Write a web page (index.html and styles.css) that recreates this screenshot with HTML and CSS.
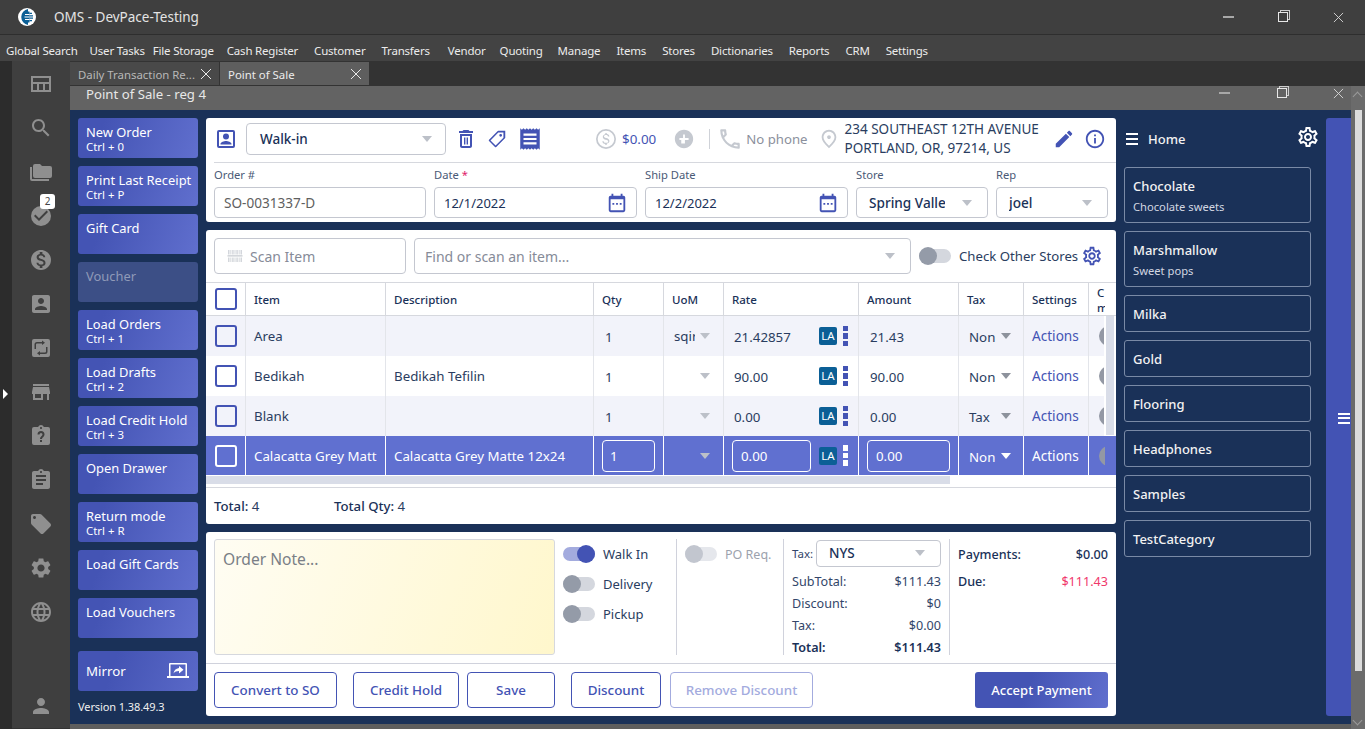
FILE: index.html
```html
<!DOCTYPE html>
<html lang="en">
<head>
<meta charset="utf-8">
<title>OMS - DevPace-Testing</title>
<link rel="stylesheet" href="styles.css">
</head>
<body>
<svg class="defs" width="0" height="0" aria-hidden="true">
  <symbol id="i-search" viewBox="0 0 24 24"><path d="M15.5 14h-.79l-.28-.27C15.41 12.59 16 11.11 16 9.5 16 5.91 13.09 3 9.5 3S3 5.91 3 9.5 5.91 16 9.5 16c1.61 0 3.09-.59 4.23-1.57l.27.28v.79l5 4.99L20.49 19l-4.99-5zm-6 0C7.01 14 5 11.99 5 9.5S7.01 5 9.5 5 14 7.01 14 9.5 11.99 14 9.5 14z"/></symbol>
  <symbol id="i-quilt" viewBox="0 0 24 24"><path d="M2 4h20v16H2V4zm2 2v4h16V6H4zm0 6v6h4v-6H4zm6 0v6h4v-6h-4zm6 0v6h4v-6h-4z"/></symbol>
  <symbol id="i-folders" viewBox="0 0 24 24"><path d="M1 7h2v12h17v2H3a2 2 0 0 1-2-2V7zm5-3h5l2 2h8a2 2 0 0 1 2 2v8a2 2 0 0 1-2 2H6a2 2 0 0 1-2-2V6a2 2 0 0 1 2-2z"/></symbol>
  <symbol id="i-check" viewBox="0 0 24 24"><path d="M12 2a10 10 0 1 0 0 20 10 10 0 0 0 0-20zm-2 15-5-5 1.41-1.41L10 14.17l7.59-7.59L19 8l-9 9z"/></symbol>
  <symbol id="i-money" viewBox="0 0 24 24"><path d="M12 2C6.48 2 2 6.48 2 12s4.48 10 10 10 10-4.48 10-10S17.52 2 12 2zm1.41 16.09V20h-2.67v-1.93c-1.71-.36-3.16-1.46-3.27-3.4h1.96c.1 1.05.82 1.87 2.65 1.87 1.96 0 2.4-.98 2.4-1.59 0-.83-.44-1.61-2.67-2.14-2.48-.6-4.18-1.62-4.18-3.67 0-1.72 1.39-2.84 3.11-3.21V4h2.67v1.95c1.86.45 2.79 1.86 2.85 3.39H14.3c-.05-1.11-.64-1.87-2.22-1.87-1.5 0-2.4.68-2.4 1.64 0 .84.65 1.39 2.67 1.91s4.18 1.39 4.18 3.91c-.01 1.83-1.38 2.83-3.12 3.16z"/></symbol>
  <symbol id="i-account" viewBox="0 0 24 24"><path d="M3 5v14c0 1.1.89 2 2 2h14c1.1 0 2-.9 2-2V5c0-1.1-.9-2-2-2H5c-1.11 0-2 .9-2 2zm12 4c0 1.66-1.34 3-3 3s-3-1.34-3-3 1.34-3 3-3 3 1.34 3 3zm-9 8c0-2 4-3.1 6-3.1s6 1.1 6 3.1v1H6v-1z"/></symbol>
  <symbol id="i-account-o" viewBox="0 0 24 24"><path d="M5 3h14a2 2 0 0 1 2 2v14a2 2 0 0 1-2 2H5a2 2 0 0 1-2-2V5a2 2 0 0 1 2-2zm0 2v14h14V5H5zm7 1.5a3 3 0 1 1 0 6 3 3 0 0 1 0-6zM6.5 17c0-1.9 3.7-3 5.5-3s5.500 1.100 5.500 3v.5h-11V17z"/></symbol>
  <symbol id="i-transfer" viewBox="0 0 24 24"><path d="M5 3h14a2 2 0 0 1 2 2v14a2 2 0 0 1-2 2H5a2 2 0 0 1-2-2V5a2 2 0 0 1 2-2zm8 1.500V6H8a2.500 2.500 0 0 0-2.500 2.500V13H7V8.500A1 1 0 0 1 8 7.500h5V9l3-2.250L13 4.500zM17 11v4.500a1 1 0 0 1-1 1h-5V15l-3 2.250 3 2.250V18h5a2.500 2.500 0 0 0 2.500-2.500V11H17z" fill-rule="evenodd"/></symbol>
  <symbol id="i-store" viewBox="0 0 24 24"><path d="M20 4H4v2h16V4zm1 10v-2l-1-5H4l-1 5v2h1v6h10v-6h4v6h2v-6h1zm-9 4H6v-4h6v4z"/></symbol>
  <symbol id="i-help" viewBox="0 0 24 24"><path d="M19 3h-4.180C14.400 1.840 13.300 1 12 1s-2.400.84-2.820 2H5a2 2 0 0 0-2 2v14a2 2 0 0 0 2 2h14a2 2 0 0 0 2-2V5a2 2 0 0 0-2-2zm-8 15v-2h2v2h-2zm3.300-5.100c-.6.6-1.300 1-1.300 2.100h-2c0-1.700.9-2.400 1.600-3.100.5-.5.900-.8.900-1.400a1.500 1.500 0 0 0-3 0H8.500a3.500 3.500 0 0 1 7 0c0 1-.6 1.800-1.200 2.400zM12 3c.55 0 1 .45 1 1s-.45 1-1 1-1-.45-1-1 .45-1 1-1z"/></symbol>
  <symbol id="i-assign" viewBox="0 0 24 24"><path d="M19 3h-4.180C14.400 1.840 13.300 1 12 1c-1.300 0-2.400.84-2.820 2H5c-1.100 0-2 .9-2 2v14c0 1.100.9 2 2 2h14c1.100 0 2-.9 2-2V5c0-1.100-.9-2-2-2zm-7 0c.55 0 1 .45 1 1s-.45 1-1 1-1-.45-1-1 .45-1 1-1zm2 14H7v-2h7v2zm3-4H7v-2h10v2zm0-4H7V7h10v2z"/></symbol>
  <symbol id="i-tag" viewBox="0 0 24 24"><path d="M21.410 11.580l-9-9C12.050 2.220 11.550 2 11 2H4c-1.100 0-2 .9-2 2v7c0 .55.22 1.050.59 1.420l9 9c.36.36.86.58 1.410.58.55 0 1.050-.22 1.410-.59l7-7c.37-.36.59-.86.59-1.410 0-.55-.23-1.060-.59-1.420zM5.500 7C4.670 7 4 6.330 4 5.500S4.670 4 5.500 4 7 4.670 7 5.500 6.330 7 5.500 7z"/></symbol>
  <symbol id="i-tag-o" viewBox="0 0 24 24"><path d="M21 3v7.500a1 1 0 0 1-.3.7l-9.500 9.500a1 1 0 0 1-1.400 0l-6.500-6.500a1 1 0 0 1 0-1.400l9.500-9.500a1 1 0 0 1 .7-.3H21a.5.5 0 0 1 0 0zm-2 2h-5.600l-8.500 8.500 5.600 5.600L19 10.600V5zm-3 1.500a1.500 1.500 0 1 1 0 3 1.500 1.500 0 0 1 0-3z"/></symbol>
  <symbol id="i-gear" viewBox="0 0 24 24"><path d="M19.140 12.940c.04-.3.06-.61.06-.94 0-.32-.02-.64-.07-.94l2.030-1.580c.18-.14.23-.41.12-.61l-1.920-3.320c-.12-.22-.37-.29-.59-.22l-2.390.96c-.5-.38-1.030-.7-1.620-.94l-.36-2.540c-.04-.24-.24-.41-.48-.41h-3.840c-.24 0-.43.17-.47.41l-.36 2.540c-.59.24-1.130.57-1.620.94l-2.390-.96c-.22-.08-.47 0-.59.22L2.740 8.870c-.12.21-.08.47.12.61l2.030 1.580c-.05.3-.09.63-.09.94s.02.64.07.94l-2.030 1.580c-.18.14-.23.41-.12.61l1.920 3.320c.12.22.37.29.59.22l2.390-.96c.5.38 1.030.7 1.620.94l.36 2.540c.05.24.24.41.48.41h3.840c.24 0 .44-.17.47-.41l.36-2.540c.59-.24 1.130-.56 1.620-.94l2.390.96c.22.08.47 0 .59-.22l1.920-3.320c.12-.22.07-.47-.12-.61l-2.010-1.580zM12 15.600c-1.980 0-3.600-1.620-3.600-3.600s1.620-3.600 3.600-3.600 3.600 1.620 3.600 3.600-1.620 3.600-3.600 3.600z"/></symbol>
  <symbol id="i-gear-o" viewBox="0 0 24 24"><path d="M19.430 12.980c.04-.32.07-.64.07-.98 0-.34-.03-.66-.07-.98l2.110-1.650c.19-.15.24-.42.12-.64l-2-3.460c-.09-.16-.26-.25-.44-.25-.06 0-.12.01-.17.03l-2.490 1c-.52-.4-1.080-.73-1.690-.98l-.38-2.650C14.460 2.180 14.250 2 14 2h-4c-.25 0-.46.18-.49.42l-.38 2.650c-.61.25-1.170.59-1.690.98l-2.490-1c-.06-.02-.12-.03-.18-.03-.17 0-.34.09-.43.25l-2 3.460c-.13.22-.07.49.12.64l2.110 1.650c-.04.32-.07.65-.07.98 0 .33.03.66.07.98l-2.110 1.650c-.19.15-.24.42-.12.64l2 3.460c.09.16.26.25.44.25.06 0 .12-.01.17-.03l2.490-1c.52.4 1.080.73 1.690.98l.38 2.650c.03.24.24.42.49.42h4c.25 0 .46-.18.49-.42l.38-2.650c.61-.25 1.170-.59 1.690-.98l2.490 1c.06.02.12.03.18.03.17 0 .34-.09.43-.25l2-3.460c.12-.22.07-.49-.12-.64l-2.110-1.650zm-1.980-1.710c.04.31.05.52.05.73 0 .21-.02.43-.05.73l-.14 1.130.89.7 1.080.84-.7 1.210-1.270-.51-1.040-.42-.9.68c-.43.32-.84.56-1.250.73l-1.060.43-.16 1.130-.2 1.350h-1.400l-.19-1.350-.16-1.130-1.060-.43c-.43-.18-.83-.41-1.230-.71l-.91-.7-1.060.43-1.270.51-.7-1.210 1.080-.84.89-.7-.14-1.130c-.03-.31-.05-.54-.05-.74s.02-.43.05-.73l.14-1.130-.89-.7-1.080-.84.7-1.210 1.270.51 1.040.42.9-.68c.43-.32.84-.56 1.250-.73l1.060-.43.16-1.130.2-1.350h1.390l.19 1.350.16 1.130 1.060.43c.43.18.83.41 1.230.71l.91.7 1.060-.43 1.270-.51.7 1.210-1.070.85-.89.7.14 1.130zM12 8c-2.210 0-4 1.790-4 4s1.790 4 4 4 4-1.790 4-4-1.790-4-4-4zm0 6c-1.100 0-2-.9-2-2s.9-2 2-2 2 .9 2 2-.9 2-2 2z"/></symbol>
  <symbol id="i-globe" viewBox="0 0 24 24"><path d="M11.990 2C6.470 2 2 6.480 2 12s4.470 10 9.990 10C17.520 22 22 17.520 22 12S17.520 2 11.990 2zm6.930 6h-2.950c-.32-1.250-.78-2.450-1.380-3.560 1.840.63 3.370 1.910 4.330 3.560zM12 4.040c.83 1.200 1.480 2.530 1.910 3.960h-3.820c.43-1.430 1.080-2.760 1.910-3.960zM4.260 14C4.100 13.360 4 12.690 4 12s.1-1.360.26-2h3.380c-.08.66-.14 1.320-.14 2 0 .68.06 1.340.14 2H4.260zm.82 2h2.950c.32 1.250.78 2.450 1.380 3.560-1.840-.63-3.370-1.900-4.330-3.560zm2.950-8H5.080c.96-1.660 2.490-2.930 4.330-3.560C8.810 5.550 8.350 6.750 8.030 8zM12 19.960c-.83-1.200-1.480-2.530-1.910-3.960h3.820c-.43 1.430-1.080 2.760-1.910 3.960zM14.340 14H9.660c-.09-.66-.16-1.320-.16-2 0-.68.07-1.350.16-2h4.680c.09.65.16 1.320.16 2 0 .68-.07 1.340-.16 2zm.25 5.560c.6-1.110 1.060-2.310 1.380-3.560h2.950c-.96 1.650-2.490 2.930-4.330 3.560zM16.360 14c.08-.66.14-1.320.14-2 0-.68-.06-1.340-.14-2h3.380c.16.64.26 1.310.26 2s-.1 1.360-.26 2h-3.380z"/></symbol>
  <symbol id="i-person" viewBox="0 0 24 24"><path d="M12 12c2.210 0 4-1.790 4-4s-1.790-4-4-4-4 1.790-4 4 1.790 4 4 4zm0 2c-2.670 0-8 1.340-8 4v2h16v-2c0-2.660-5.330-4-8-4z"/></symbol>
  <symbol id="i-trash" viewBox="0 0 24 24"><path d="M6 19c0 1.100.9 2 2 2h8c1.100 0 2-.9 2-2V7H6v12zM8 9h8v10H8V9zm2 1.500h1.400v7H10zm2.600 0H14v7h-1.400zM15.500 4l-1-1h-5l-1 1H5v2h14V4z"/></symbol>
  <symbol id="i-receipt" viewBox="0 0 24 24"><path d="M18 17H6v-2h12v2zm0-4H6v-2h12v2zm0-4H6V7h12v2zM3 22l1.500-1.500L6 22l1.500-1.500L9 22l1.500-1.500L12 22l1.500-1.500L15 22l1.500-1.500L18 22l1.500-1.500L21 22V2l-1.500 1.500L18 2l-1.500 1.500L15 2l-1.500 1.500L12 2l-1.500 1.500L9 2 7.500 3.500 6 2 4.500 3.500 3 2v20z"/></symbol>
  <symbol id="i-add" viewBox="0 0 24 24"><path d="M12 2C6.480 2 2 6.480 2 12s4.480 10 10 10 10-4.480 10-10S17.520 2 12 2zm5 11h-4v4h-4v-4H7v-2h4V7h2v4h4v2z"/></symbol>
  <symbol id="i-phone" viewBox="0 0 24 24"><path d="M6.540 5c.06.89.21 1.760.45 2.590l-1.200 1.200c-.41-1.200-.67-2.470-.76-3.790h1.510m9.860 12.020c.85.24 1.720.39 2.600.45v1.490c-1.320-.09-2.590-.35-3.800-.75l1.200-1.190M7.500 3H4c-.55 0-1 .45-1 1 0 9.390 7.610 17 17 17 .55 0 1-.45 1-1v-3.490c0-.55-.45-1-1-1-1.240 0-2.450-.2-3.570-.57-.1-.04-.21-.05-.31-.05-.26 0-.51.1-.71.29l-2.200 2.200c-2.830-1.450-5.150-3.760-6.590-6.590l2.200-2.200c.28-.28.36-.67.25-1.020C8.700 6.450 8.500 5.250 8.500 4c0-.55-.45-1-1-1z"/></symbol>
  <symbol id="i-place" viewBox="0 0 24 24"><path d="M12 12c-1.100 0-2-.9-2-2s.9-2 2-2 2 .9 2 2-.9 2-2 2zm6-1.800C18 6.570 15.350 4 12 4s-6 2.570-6 6.200c0 2.340 1.950 5.440 6 9.140 4.050-3.700 6-6.800 6-9.140zM12 2c4.200 0 8 3.220 8 8.200 0 3.320-2.670 7.250-8 11.800-5.330-4.550-8-8.480-8-11.800C4 5.220 7.800 2 12 2z"/></symbol>
  <symbol id="i-edit" viewBox="0 0 24 24"><path d="M3 17.250V21h3.750L17.810 9.940l-3.750-3.750L3 17.250zM20.710 7.040c.39-.39.39-1.020 0-1.410l-2.340-2.340c-.39-.39-1.020-.39-1.410 0l-1.830 1.830 3.750 3.750 1.830-1.830z"/></symbol>
  <symbol id="i-info" viewBox="0 0 24 24"><path d="M11 7h2v2h-2zm0 4h2v6h-2zm1-9C6.480 2 2 6.480 2 12s4.480 10 10 10 10-4.480 10-10S17.520 2 12 2zm0 18c-4.410 0-8-3.590-8-8s3.590-8 8-8 8 3.590 8 8-3.590 8-8 8z"/></symbol>
  <symbol id="i-cal" viewBox="0 0 24 24"><path d="M19 4h-1V2h-2v2H8V2H6v2H5a2 2 0 0 0-2 2v14a2 2 0 0 0 2 2h14a2 2 0 0 0 2-2V6a2 2 0 0 0-2-2zm0 16H5V8h14v12zM7 12h2v2H7zm4 0h2v2h-2zm4 0h2v2h-2z"/></symbol>
  <symbol id="i-dollar" viewBox="0 0 24 24"><path d="M12 2a10 10 0 1 0 0 20 10 10 0 0 0 0-20zm0 1.700a8.300 8.300 0 1 1 0 16.600 8.300 8.300 0 0 1 0-16.600zM11.300 6v1.300c-1.500.3-2.500 1.300-2.500 2.600 0 1.600 1.300 2.300 3.200 2.800 1.700.4 2.200 1 2.200 1.700 0 .6-.5 1.400-2.200 1.400-1.500 0-2.200-.7-2.300-1.600H8.300c.1 1.600 1.300 2.600 3 2.900V18h1.400v-1.300c1.600-.3 2.700-1.200 2.700-2.700 0-2-1.700-2.700-3.300-3.100-1.700-.4-2.100-.9-2.100-1.500 0-.7.700-1.300 2-1.300s1.900.6 2 1.500h1.400c-.1-1.400-1-2.400-2.700-2.800V6h-1.400z"/></symbol>
  <symbol id="i-barcode" viewBox="0 0 24 24"><path d="M3 4h1.500v6H3zm3 0h1v6H6zm2.500 0H10v6H8.500zm3 0h1v6h-1zm2.500 0h1.500v6H14zm3 0h1v6h-1zm2.500 0H21v6h-1.500zM2 11h20v1.500H2zM3 14h1.500v6H3zm3 0h1v6H6zm2.500 0H10v6H8.500zm3 0h1v6h-1zm2.500 0h1.500v6H14zm3 0h1v6h-1zm2.500 0H21v6h-1.500z"/></symbol>
  <symbol id="i-mirror" viewBox="0 0 24 24"><path d="M4 4h16a1 1 0 0 1 1 1v12h2v2H1v-2h2V5a1 1 0 0 1 1-1zm.500 1.500V17h15V5.500h-15zM13 7l4.500 3.700L13 14.400v-2.300c-2.500 0-4.200.8-5.500 2.400.5-2.800 2.200-5.100 5.500-5.500V7z"/></symbol>
</svg>

<div class="app">
  <header class="titlebar">
    <svg class="logo" viewBox="0 0 18 18"><circle cx="9" cy="9" r="9" fill="#fff"/><path d="M10 1.100a8 8 0 0 0 0 15.800z" fill="#0b5f96"/><path d="M10 3.500h1.500v11H10z" fill="#0b5f96"/><path d="M7 6.500h4.500M6.500 9h5M7 11.500h4.500" stroke="#fff" stroke-width="1.200"/><path d="M11.500 5.400h2.500M11.500 7.800h3.500M11.500 10.200h3.500M11.500 12.600h2.500" stroke="#0b5f96" stroke-width="1.200"/></svg>
    <span class="app-title">OMS - DevPace-Testing</span>
    <div class="win-controls">
      <span class="win-btn win-min"></span>
      <span class="win-btn win-max"></span>
      <svg class="win-close" viewBox="0 0 12 12"><path d="M1 1l10 10M11 1L1 11" stroke="#d8d8d8" stroke-width="1" fill="none"/></svg>
    </div>
  </header>
  <nav class="menubar">
    <span>Global Search</span><span>User Tasks</span><span>File Storage</span><span>Cash Register</span><span>Customer</span><span>Transfers</span><span>Vendor</span><span>Quoting</span><span>Manage</span><span>Items</span><span>Stores</span><span>Dictionaries</span><span>Reports</span><span>CRM</span><span>Settings</span>
  </nav>
  <div class="workspace">
    <div class="edge"><span class="edge-arrow"></span></div>
    <aside class="rail">
      <svg class="rail-i"><use href="#i-quilt"/></svg>
      <svg class="rail-i"><use href="#i-search"/></svg>
      <svg class="rail-i"><use href="#i-folders"/></svg>
      <div class="rail-badged"><svg class="rail-i"><use href="#i-check"/></svg><span class="badge">2</span></div>
      <svg class="rail-i"><use href="#i-money"/></svg>
      <svg class="rail-i"><use href="#i-account"/></svg>
      <svg class="rail-i"><use href="#i-transfer"/></svg>
      <svg class="rail-i"><use href="#i-store"/></svg>
      <svg class="rail-i"><use href="#i-help"/></svg>
      <svg class="rail-i"><use href="#i-assign"/></svg>
      <svg class="rail-i"><use href="#i-tag"/></svg>
      <svg class="rail-i"><use href="#i-gear"/></svg>
      <svg class="rail-i"><use href="#i-globe"/></svg>
      <svg class="rail-i rail-last"><use href="#i-person"/></svg>
    </aside>
    <div class="content">
      <div class="tabs">
        <div class="tab"><span class="tab-text">Daily Transaction Re...</span><svg class="tab-x" viewBox="0 0 12 12"><path d="M1 1l10 10M11 1L1 11" stroke="#e8e8e8" fill="none"/></svg></div>
        <div class="tab tab-active"><span class="tab-text">Point of Sale</span><svg class="tab-x" viewBox="0 0 12 12"><path d="M1 1l10 10M11 1L1 11" stroke="#e8e8e8" fill="none"/></svg></div>
      </div>
      <div class="window">
        <div class="win-main">
          <div class="win-head">
            <span class="win-title">Point of Sale - reg 4</span>
            <div class="win-controls sub">
              <span class="win-btn win-min"></span>
              <span class="win-btn win-max"></span>
              <svg class="win-close" viewBox="0 0 12 12"><path d="M1 1l10 10M11 1L1 11" stroke="#d8d8d8" fill="none"/></svg>
            </div>
          </div>
          <div class="pos">
            <div class="actions">
              <button class="act"><b>New Order</b><i>Ctrl + 0</i></button>
              <button class="act"><b>Print Last Receipt</b><i>Ctrl + P</i></button>
              <button class="act"><b>Gift Card</b></button>
              <button class="act act-off"><b>Voucher</b></button>
              <button class="act"><b>Load Orders</b><i>Ctrl + 1</i></button>
              <button class="act"><b>Load Drafts</b><i>Ctrl + 2</i></button>
              <button class="act"><b>Load Credit Hold</b><i>Ctrl + 3</i></button>
              <button class="act"><b>Open Drawer</b></button>
              <button class="act"><b>Return mode</b><i>Ctrl + R</i></button>
              <button class="act"><b>Load Gift Cards</b></button>
              <button class="act"><b>Load Vouchers</b></button>
              <button class="mirror"><span>Mirror</span><svg class="mirror-i"><use href="#i-mirror"/></svg></button>
              <div class="version">Version 1.38.49.3</div>
            </div>

            <main class="center">
              <section class="card order">
                <div class="cust-row">
                  <svg class="ic24 blue"><use href="#i-account-o"/></svg>
                  <div class="field cust-select"><span class="sel-text">Walk-in</span><span class="caret"></span></div>
                  <svg class="ic24 blue trash"><use href="#i-trash"/></svg>
                  <svg class="ic22 blue tag"><use href="#i-tag-o"/></svg>
                  <svg class="ic26 blue receipt"><use href="#i-receipt"/></svg>
                  <svg class="ic24 pale dollar"><use href="#i-dollar"/></svg>
                  <span class="bal">$0.00</span>
                  <svg class="ic22 pale add"><use href="#i-add"/></svg>
                  <span class="vsep"></span>
                  <svg class="ic26 pale phone"><use href="#i-phone"/></svg>
                  <span class="nophone">No phone</span>
                  <svg class="ic22 pale place"><use href="#i-place"/></svg>
                  <span class="addr">234 SOUTHEAST 12TH AVENUE<br>PORTLAND, OR, 97214, US</span>
                  <svg class="ic22 blue edit"><use href="#i-edit"/></svg>
                  <svg class="ic22 blue info"><use href="#i-info"/></svg>
                </div>
                <div class="form-row">
                  <label class="fg w-order"><span>Order #</span><div class="field muted">SO-0031337-D</div></label>
                  <label class="fg w-date"><span>Date <em>*</em></span><div class="field">12/1/2022<svg class="ic22 blue cal"><use href="#i-cal"/></svg></div></label>
                  <label class="fg w-date"><span>Ship Date</span><div class="field">12/2/2022<svg class="ic22 blue cal"><use href="#i-cal"/></svg></div></label>
                  <label class="fg w-store"><span>Store</span><div class="field selb"><span class="clip">Spring Valle</span><span class="caret"></span></div></label>
                  <label class="fg w-rep"><span>Rep</span><div class="field selb"><span class="clip">joel</span><span class="caret"></span></div></label>
                </div>
              </section>

              <section class="card items">
                <div class="search-row">
                  <div class="field scan"><svg class="ic18 bar"><use href="#i-barcode"/></svg><span>Scan Item</span></div>
                  <div class="field find"><span>Find or scan an item...</span><span class="caret"></span></div>
                  <span class="toggle off"><span class="knob"></span></span>
                  <span class="check-label">Check Other Stores</span>
                  <svg class="ic22 blue"><use href="#i-gear-o"/></svg>
                </div>
                <div class="table">
                  <div class="row head">
                    <div class="c c0"><span class="cb"></span></div><div class="c">Item</div><div class="c">Description</div><div class="c">Qty</div><div class="c">UoM</div><div class="c">Rate</div><div class="c">Amount</div><div class="c">Tax</div><div class="c">Settings</div><div class="c clast">C<br>m</div>
                  </div>
                  <div class="row alt">
                    <div class="c c0"><span class="cb"></span></div><div class="c">Area</div><div class="c"></div><div class="c q">1</div><div class="c u"><span class="uom">sqir</span><span class="caret"></span></div><div class="c r"><span class="rv">21.42857</span><span class="la">LA</span><span class="dots"><s></s><s></s><s></s></span></div><div class="c a">21.43</div><div class="c t"><span class="tv">Non</span><span class="caret dark"></span></div><div class="c link">Actions</div><div class="c clast"><span class="stub"></span></div>
                  </div>
                  <div class="row">
                    <div class="c c0"><span class="cb"></span></div><div class="c">Bedikah</div><div class="c">Bedikah Tefilin</div><div class="c q">1</div><div class="c u"><span class="uom"></span><span class="caret"></span></div><div class="c r"><span class="rv">90.00</span><span class="la">LA</span><span class="dots"><s></s><s></s><s></s></span></div><div class="c a">90.00</div><div class="c t"><span class="tv">Non</span><span class="caret dark"></span></div><div class="c link">Actions</div><div class="c clast"><span class="stub"></span></div>
                  </div>
                  <div class="row alt">
                    <div class="c c0"><span class="cb"></span></div><div class="c">Blank</div><div class="c"></div><div class="c q">1</div><div class="c u"><span class="uom"></span><span class="caret"></span></div><div class="c r"><span class="rv">0.00</span><span class="la">LA</span><span class="dots"><s></s><s></s><s></s></span></div><div class="c a">0.00</div><div class="c t"><span class="tv">Tax</span><span class="caret dark"></span></div><div class="c link">Actions</div><div class="c clast"><span class="stub"></span></div>
                  </div>
                  <div class="row sel">
                    <div class="c c0"><span class="cb"></span></div><div class="c">Calacatta Grey Matt</div><div class="c">Calacatta Grey Matte 12x24</div><div class="c q"><span class="cell-in w-q">1</span></div><div class="c u"><span class="uom"></span><span class="caret"></span></div><div class="c r"><span class="cell-in w-r">0.00</span><span class="la">LA</span><span class="dots"><s></s><s></s><s></s></span></div><div class="c a"><span class="cell-in w-a">0.00</span></div><div class="c t"><span class="tv">Non</span><span class="caret lite"></span></div><div class="c actions-sel">Actions</div><div class="c clast"><span class="stub"></span></div>
                  </div>
                  <span class="vscroll"></span>
                </div>
                <div class="hscroll"><span></span></div>
                <div class="totals"><span class="tot1"><b>Total:</b> 4</span><span><b>Total Qty:</b> 4</span></div>
              </section>

              <section class="card summary">
                <div class="sum-top">
                  <div class="note">Order Note...</div>
                  <div class="modes">
                    <div class="mode"><span class="toggle on"><span class="knob"></span></span>Walk In</div>
                    <div class="mode"><span class="toggle off"><span class="knob"></span></span>Delivery</div>
                    <div class="mode"><span class="toggle off"><span class="knob"></span></span>Pickup</div>
                  </div>
                  <div class="po"><span class="toggle dim"><span class="knob"></span></span>PO Req.</div>
                  <div class="tot-col">
                    <div class="tax-row"><span>Tax:</span><div class="field tax-sel"><span>NYS</span><span class="caret"></span></div></div>
                    <div class="kv"><span>SubTotal:</span><span>$111.43</span></div>
                    <div class="kv"><span>Discount:</span><span>$0</span></div>
                    <div class="kv"><span>Tax:</span><span>$0.00</span></div>
                    <div class="kv strong"><span>Total:</span><span>$111.43</span></div>
                  </div>
                  <div class="pay-col">
                    <div class="kv med"><span>Payments:</span><span>$0.00</span></div>
                    <div class="kv med"><span>Due:</span><span class="due">$111.43</span></div>
                  </div>
                </div>
                <div class="sum-actions">
                  <button class="btn w1">Convert to SO</button>
                  <button class="btn w2">Credit Hold</button>
                  <button class="btn w3">Save</button>
                  <button class="btn w4">Discount</button>
                  <button class="btn w5 btn-off">Remove Discount</button>
                  <button class="btn-primary">Accept Payment</button>
                </div>
              </section>
            </main>

            <aside class="cats">
              <div class="cats-head">
                <span class="burger"><s></s><s></s><s></s></span>
                <span class="home">Home</span>
                <svg class="cats-gear"><use href="#i-gear-o"/></svg>
              </div>
              <div class="cat tall"><b>Chocolate</b><span>Chocolate sweets</span></div>
              <div class="cat tall"><b>Marshmallow</b><span>Sweet pops</span></div>
              <div class="cat"><b>Milka</b></div>
              <div class="cat"><b>Gold</b></div>
              <div class="cat"><b>Flooring</b></div>
              <div class="cat"><b>Headphones</b></div>
              <div class="cat"><b>Samples</b></div>
              <div class="cat"><b>TestCategory</b></div>
            </aside>

            <div class="side-tab"><span class="side-bars"><s></s><s></s><s></s></span></div>
          </div>
          <div class="win-foot"></div>
        </div>
        <div class="pagebar"><span class="chev chev-up"></span><span class="thumb"></span><span class="chev chev-down"></span></div>
      </div>
    </div>
  </div>
</div>
</body>
</html>
```
FILE: styles.css
```css
* { box-sizing: border-box; }
html, body { margin: 0; height: 100%; overflow: hidden; }
body { font-family: "Noto Sans", "Open Sans", sans-serif; font-size: 14px; color: #1a3158; background: #333; }
.defs { position: absolute; }
button { font-family: inherit; cursor: default; }
s { text-decoration: none; display: block; }

.app { width: 1365px; height: 729px; display: flex; flex-direction: column; }

.titlebar { height: 35px; flex: none; background: #3f3f3f; border-bottom: 1px solid #2e2e2e; display: flex; align-items: center; padding-left: 18px; }
.logo { width: 18px; height: 18px; }
.app-title { margin-left: 18px; font-size: 13.500px; color: #e4e4e4; }
.win-controls { margin-left: auto; display: flex; align-items: center; padding-right: 21px; }
.win-btn { display: block; }
.win-min { width: 11px; height: 2px; background: #a8a8a8; }
.win-max { width: 10px; height: 10px; border: 1px solid #e8e8e8; margin-left: 44px; box-shadow: 2px -2px 0 -1px #3f3f3f, 2px -2px 0 0 #cfcfcf; }
.win-close { width: 11px; height: 11px; margin-left: 45px; }

.menubar { height: 26px; flex: none; background: #434343; display: flex; align-items: center; padding: 4px 0 0 6px; gap: 16px; font-size: 11.500px; letter-spacing: -0.2px; color: #ececec; white-space: nowrap; }
.menubar span:nth-child(1) { margin-right: -4px; }
.menubar span:nth-child(2) { margin-right: -8px; }
.menubar span:nth-child(3) { margin-right: -3px; }
.menubar span:nth-child(4) { margin-right: 0; }
.menubar span:nth-child(6) { margin-right: 2px; }
.menubar span:nth-child(7) { margin-right: -2px; }
.menubar span:nth-child(8) { margin-right: -1px; }

.workspace { flex: 1; display: flex; min-height: 0; background: #333; }
.edge { width: 12px; flex: none; background: #2c2c2c; display: flex; align-items: center; padding-left: 3px; padding-top: 0; }
.edge-arrow { width: 0; height: 0; border-left: 5px solid #fff; border-top: 5px solid transparent; border-bottom: 5px solid transparent; margin-top: -2px; }
.rail { width: 58px; flex: none; background: #3f3f3f; display: flex; flex-direction: column; align-items: center; padding: 11px 0 0 0; gap: 20px; margin-bottom: 1px; }
.rail-i { width: 24px; height: 24px; fill: #8f8f8f; display: block; flex: none; }
.rail-last { margin-top: 50px; }
.rail-badged { position: relative; height: 24px; }
.badge { position: absolute; left: 11px; top: -10px; width: 15px; height: 15px; background: #fff; border-radius: 3px; color: #444; font-size: 10px; line-height: 15px; text-align: center; }

.content { flex: 1; min-width: 0; display: flex; flex-direction: column; }
.tabs { height: 25px; flex: none; display: flex; padding-top: 1px; gap: 1px; background: #333; }
.tab { width: 149px; height: 23px; background: #494949; color: #b8b8b8; font-size: 11.400px; display: flex; align-items: center; padding: 2px 7px 0 8px; justify-content: space-between; white-space: nowrap; }
.tab-active { background: #5e5e5e; color: #ececec; }
.tab-x { width: 12px; height: 12px; margin-top: -1px; }

.window { flex: 1; min-height: 0; display: flex; }
.win-main { flex: 1; min-width: 0; display: flex; flex-direction: column; }
.win-head { height: 24px; flex: none; background: #636363; display: flex; align-items: flex-start; padding-left: 16px; }
.win-title { font-size: 13.200px; line-height: 16px; color: #e8e8e8; }
.win-controls.sub { padding-right: 7px; height: 14px; }
.win-controls.sub .win-max { box-shadow: 2px -2px 0 -1px #636363, 2px -2px 0 0 #cfcfcf; margin-left: 47px; }
.win-controls.sub .win-close { margin-left: 46px; }

.pos { height: 614px; flex: none; background: #1a3158; padding: 8px 0 8px 8px; display: flex; align-items: stretch; }
.win-foot { flex: 1; background: #5e5e5e; }

.actions { width: 120px; flex: none; display: flex; flex-direction: column; gap: 8px; }
.act { height: 40px; flex: none; border: 0; border-radius: 3px; padding: 6px 8px 0; text-align: left; color: #fff; background: linear-gradient(110deg, #4454b4 20%, #606fce 100%); display: flex; flex-direction: column; align-items: flex-start; }
.act b { font-weight: 400; font-size: 12.900px; line-height: 16px; white-space: nowrap; }
.act i { font-style: normal; font-size: 11.400px; line-height: 14px; }
.act-off { background: #3c4f86; color: #8f9ab8; }
.mirror { height: 40px; flex: none; margin-top: 5px; border: 0; border-radius: 3px; background: linear-gradient(110deg, #4454b4 30%, #5a69c8 100%); color: #fff; font-size: 13.300px; display: flex; align-items: center; justify-content: space-between; padding: 0 8px 0 8px; }
.mirror-i { width: 24px; height: 24px; fill: #fff; }
.version { font-size: 11px; letter-spacing: -0.1px; color: #f0f0f0; margin-top: -3px; line-height: 22px; }

.center { width: 910px; flex: none; margin-left: 8px; display: flex; flex-direction: column; gap: 8px; }
.card { background: #fff; border-radius: 3px; flex: none; overflow: hidden; }
.order { height: 104px; }
.items { height: 294px; }
.summary { height: 184px; }

.field { height: 31px; border: 1px solid #c4c7d0; border-radius: 4px; background: #fff; display: flex; align-items: center; color: #1a3158; font-size: 14px; }
.muted { color: #606060; font-size: 13.600px; }
.w-date .field { font-size: 13px; }
.blue { fill: #4353b4; }
.pale { fill: #c5c9d0; }
.ic26 { width: 26px; height: 26px; flex: none; }
.ic24 { width: 24px; height: 24px; flex: none; }
.ic22 { width: 22px; height: 22px; flex: none; }
.ic18 { width: 18px; height: 18px; flex: none; }
.caret { width: 0; height: 0; border-left: 5.500px solid transparent; border-right: 5.500px solid transparent; border-top: 6px solid #bcc0c8; flex: none; display: block; }
.caret.dark { border-top-color: #8d929c; }
.caret.lite { border-top-color: #fff; }

.cust-row { height: 45px; margin-left: 8px; border-bottom: 1px solid #d6d8de; display: flex; align-items: center; padding-bottom: 3px; }
.cust-select { width: 200px; margin-left: 8px; height: 32px; padding: 0 8px 0 13px; justify-content: space-between; font-weight: 500; font-size: 13.500px; }
.cust-select .caret { margin-right: 5px; }
.trash { margin-left: 8px; }
.tag { margin-left: 8px; }
.receipt { margin-left: 9px; }
.dollar { margin-left: 51px; }
.bal { color: #4353b4; font-size: 13.400px; margin-left: 4px; }
.add { margin-left: 17px; }
.vsep { width: 1px; height: 20px; background: #cfd2d8; margin-left: 14px; }
.phone { margin-left: 7px; }
.nophone { color: #8b909c; font-size: 13.200px; margin-left: 3px; }
.place { margin-left: 10px; }
.addr { margin-left: 5px; font-size: 13.500px; line-height: 19px; white-space: nowrap; color: #2a3d60; }
.edit { margin-left: 14px; }
.info { margin-left: 9px; }

.form-row { display: flex; padding: 3px 8px 0; gap: 8px; }
.fg { display: flex; flex-direction: column; }
.fg > span { font-size: 11.200px; line-height: 17px; color: #4a5a76; height: 21px; }
.fg em { color: #e0206a; font-style: normal; }
.w-order { width: 212px; }
.w-date { width: 203px; }
.w-store { width: 132px; }
.w-rep { width: 112px; }
.fg .field { padding: 0 8px 0 9px; justify-content: space-between; }
.selb { padding: 0 15px 0 12px !important; font-weight: 500; font-size: 13.600px; }
.clip { width: 76px; overflow: hidden; white-space: nowrap; }
.cal { fill: #4353b4; }

.search-row { height: 52px; display: flex; align-items: center; padding: 0 12px 0 8px; }
.scan { width: 192px; height: 36px; padding-left: 11px; color: #868b98; }
.bar { fill: #c5c9d0; margin-right: 6px; }
.find { width: 497px; height: 36px; margin-left: 8px; padding: 0 15px 0 10px; justify-content: space-between; color: #868b98; }
.toggle { width: 32px; height: 14px; border-radius: 7px; background: #d4d7de; position: relative; display: block; flex: none; }
.knob { position: absolute; top: -2px; left: 0; width: 18px; height: 18px; border-radius: 50%; background: #949ba8; }
.toggle.on { background: #a3abde; }
.toggle.on .knob { left: 14px; background: #4353b4; }
.toggle.dim { background: #e5e7ec; }
.toggle.dim .knob { background: #c2c6cf; }
.search-row .toggle { margin-left: 8px; }
.check-label { font-size: 13.200px; margin-left: 8px; white-space: nowrap; color: #2a3d60; }
.search-row .ic22 { margin-left: 3px; }

.table { position: relative; height: 193px; overflow: hidden; border-top: 1px solid #d6d8de; }
.row { display: grid; grid-template-columns: 40px 140px 208px 70px 60px 135px 100px 65px 65px 16px; height: 40px; font-size: 13.300px; color: #2a3d60; }
.row.head { height: 33px; font-size: 11.500px; font-weight: 500; border-bottom: 1px solid #d6d8de; color: #1a3158; }
.c { border-right: 1px solid #e3e5ea; display: flex; align-items: center; padding-left: 8px; white-space: nowrap; overflow: hidden; min-width: 0; }
.head .c { border-right-color: #d6d8de; }
.c0 { padding-left: 9px; }
.clast { border-right: 0; padding-left: 8px; line-height: 15px; font-size: 11.500px; }
.head .clast { padding-top: 1px; }
.cb { display: block; width: 22px; height: 22px; border: 2px solid #4353b4; border-radius: 3px; background: transparent; flex: none; }
.alt { background: #f2f3fa; }
.q { padding-left: 11px; }
.u { padding-left: 10px; }
.uom { width: 21px; overflow: hidden; margin-right: 5px; flex: none; }
.r { padding-left: 10px; }
.rv { width: 85px; flex: none; }
.a { padding-left: 11px; }
.t { padding-left: 10px; }
.tv { width: 32px; flex: none; }
.row:not(.sel) .q, .row:not(.sel) .a, .rv, .tv { padding-top: 2px; }
.link { color: #4353b4; font-size: 13.600px; padding-bottom: 1px; }
.actions-sel { font-size: 13.600px; }
.la { width: 18px; height: 18px; background: #0b5f96; color: #fff; font-size: 11.500px; line-height: 18px; text-align: center; border-radius: 2px; flex: none; }
.dots { margin-left: 6px; flex: none; display: flex; flex-direction: column; gap: 2px; }
.dots s { width: 5px; height: 5.500px; background: #4353b4; }
.stub { display: block; width: 10px; height: 20px; margin-left: 2px; border-radius: 10px 0 0 10px; background: #9398a4; flex: none; }
.row .clast { padding-left: 8px; }
.sel { background: #6070d0; color: #fff; height: 39px; }
.sel .c { border-right-color: #fff; }
.sel .c0 { padding-left: 9px; }
.sel .cb { border-color: #fff; }
.sel .dots s { background: #fff; }
.sel .clast { border: 0; }
.cell-in { display: flex; align-items: center; height: 32px; border: 1px solid #fff; border-radius: 4px; padding-left: 7px; flex: none; }
.w-q { width: 53px; }
.q .cell-in { margin-left: -3px; }
.w-r { width: 79px; margin-right: 8px; margin-left: -2px; padding-left: 8px; }
.w-a { width: 83px; margin-left: -3px; padding-left: 8px; }
.vscroll { position: absolute; right: 0; top: 33px; width: 12px; height: 120px; background: #fff; border-left: 2px solid #fff; box-shadow: inset -2px 0 0 #fff; }
.vscroll::before { content: ""; position: absolute; left: 0; top: 0; width: 8px; height: 119px; background: #d9dde8; }
.hscroll { height: 12px; background: #fff; position: relative; border-bottom: 1px solid #d6d8de; }
.hscroll span { display: block; width: 744px; height: 8px; margin-top: 1px; background: #d9dde8; }
.totals { display: flex; align-items: center; height: 36px; padding-left: 8px; font-size: 13.200px; color: #2a3d60; }
.totals b { font-weight: 500; color: #1a3158; }
.tot1 { width: 120px; }

.sum-top { height: 132px; border-bottom: 1px solid #d0d2dc; display: flex; padding: 7px 8px 0 8px; }
.note { width: 341px; height: 116px; border: 1px solid #d6d8de; border-radius: 3px; background: linear-gradient(110deg, #fffdf3 0%, #fff7cc 100%); color: #7a7f86; padding: 7px 8px; font-size: 15.600px; line-height: 24px; }
.modes { width: 122px; flex: none; padding: 0 0 0 8px; border-right: 1px solid #d0d2dc; height: 116px; }
.mode { height: 30px; display: flex; align-items: center; font-size: 13px; color: #2a3d60; }
.mode .toggle { margin-right: 8px; }
.po { width: 106px; flex: none; display: flex; align-items: center; height: 30px; padding: 0 0 0 8px; font-size: 12.500px; color: #9ca2ad; }
.po .toggle { margin-right: 8px; width: 32px; }
.tot-col { width: 167px; flex: none; height: 116px; padding: 0 8px 0 8px; border-left: 1px solid #d0d2dc; border-right: 1px solid #d0d2dc; font-size: 12.600px; color: #33466a; }
.tax-row { display: flex; align-items: center; height: 28px; font-size: 11.500px; margin-bottom: 4px; }
.tax-sel { width: 125px; height: 27px; margin-left: auto; padding: 0 15px 0 12px; justify-content: space-between; font-weight: 500; font-size: 13.500px; }
.kv { display: flex; justify-content: space-between; height: 22px; line-height: 22px; }
.strong { font-weight: 600; color: #1a3158; }
.pay-col { flex: 1; padding: 2px 0 0 8px; font-size: 12.600px; }
.med { font-weight: 500; height: 27px; line-height: 27px; color: #1a3158; }
.due { color: #f0386b; font-weight: 400; }

.sum-actions { display: flex; align-items: center; height: 52px; padding: 0 8px; }
.btn { height: 36px; border: 1px solid #4353b4; border-radius: 4px; background: #fff; color: #4353b4; font-size: 13.400px; font-weight: 500; padding: 0; }
.w1 { width: 123px; }
.w2 { width: 106px; margin-left: 16px; }
.w3 { width: 88px; margin-left: 8px; }
.w4 { width: 90px; margin-left: 16px; }
.w5 { width: 143px; margin-left: 9px; }
.btn-off { border-color: #a3abde; color: #a3abde; }
.btn-primary { margin-left: auto; width: 133px; height: 36px; border: 0; border-radius: 3px; background: linear-gradient(110deg, #4454b4 40%, #606fce 100%); color: #fff; font-size: 13px; font-weight: 500; }

.cats { width: 195px; flex: none; margin-left: 8px; display: flex; flex-direction: column; gap: 8px; }
.cats-head { height: 41px; flex: none; display: flex; align-items: center; color: #fff; padding: 0 0 0 2px; }
.burger { display: flex; flex-direction: column; gap: 3px; }
.burger s { width: 12px; height: 2px; background: #fff; }
.home { margin-left: 10px; font-size: 13px; font-weight: 500; color: #f2f2f2; }
.cats-gear { width: 24px; height: 24px; fill: #fff; margin-left: auto; margin-top: -3px; margin-right: -1px; }
.cat { width: 187px; height: 37px; flex: none; border: 1px solid #7a8aa6; border-radius: 3px; display: flex; flex-direction: column; justify-content: center; padding-left: 8px; color: #f2f2f2; }
.cat b { font-weight: 500; font-size: 13px; line-height: 18px; }
.cat span { font-size: 11.200px; line-height: 17px; color: #d2d7e2; margin-top: 3px; }
.cat.tall { height: 56px; padding-top: 2px; }

.side-tab { width: 25px; flex: none; margin-left: 7px; background: #4353b4; border-radius: 3px 0 0 3px; display: flex; align-items: center; padding-left: 12px; }
.side-bars { display: flex; flex-direction: column; gap: 2.500px; margin-top: 2px; }
.side-bars s { width: 12px; height: 2px; background: #fff; }

.pagebar { width: 14px; flex: none; background: #6b6b6b; position: relative; padding-top: 24px; }
.chev { position: absolute; left: 3px; width: 7px; height: 7px; border-left: 1px solid #9a9a9a; border-top: 1px solid #9a9a9a; }
.chev-up { top: 7px; transform: rotate(45deg); }
.chev-down { top: 631px; transform: rotate(225deg); }
.thumb { display: block; margin-left: 4px; width: 7px; height: 561px; background: #dcdcdc; }
```
